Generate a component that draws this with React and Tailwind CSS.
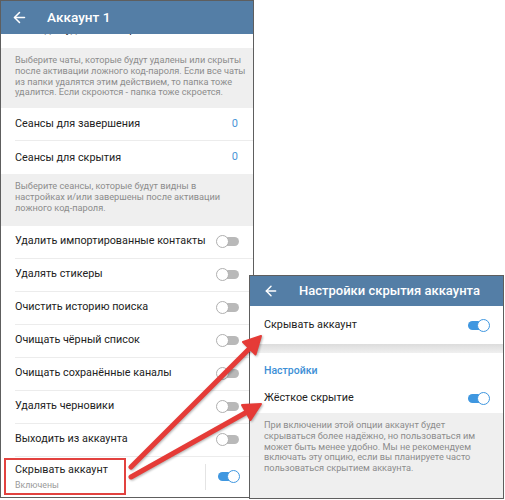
import React from "react";
import { ArrowLeft } from "lucide-react";

const Toggle = ({ on }) => (
  <div className="relative w-[24px] h-[13px] flex items-center justify-center">
    <div
      className={`w-[21px] h-[9px] rounded-full ${
        on ? "bg-[#3f97e0]" : "bg-[#b9b9b9]"
      }`}
    />
    <div
      className={`absolute top-0 w-[13px] h-[13px] rounded-full bg-white border-[1.5px] ${
        on ? "right-0 border-[#3f97e0]" : "left-0 border-[#b0b0b0]"
      }`}
    />
  </div>
);

const Row = ({ label, value, toggle, last }) => (
  <div className="h-[33px] pl-[14px] bg-white">
    <div
      className={`h-full flex items-center justify-between pr-[13px] ${
        last ? "" : "border-b border-[#ececec]"
      }`}
    >
      <span className="text-[10.8px] text-[#222] whitespace-nowrap">{label}</span>
      {value !== undefined && (
        <span className="text-[11px] text-[#4a95d6] pr-[2px]">{value}</span>
      )}
      {toggle !== undefined && <Toggle on={toggle} />}
    </div>
  </div>
);

const Info = ({ lines, className = "" }) => (
  <div
    className={`bg-[#efefef] px-[14px] pt-[7px] text-[9.2px] leading-[10.8px] text-[#8c8c8c] ${className}`}
  >
    {lines.map((l) => (
      <div key={l} className="whitespace-nowrap">
        {l}
      </div>
    ))}
  </div>
);

export default function App() {
  return (
    <div className="relative w-[505px] h-[500px] bg-white overflow-hidden font-['Roboto',sans-serif]">
      {/* left window */}
      <div className="w-[254px] h-[498px] border border-[#5e5e5e] flex flex-col overflow-hidden bg-white">
        <div className="h-[33px] shrink-0 bg-[#547ea6] flex items-center pl-[10px] gap-[19px] relative z-10">
          <ArrowLeft className="w-[17px] h-[17px] text-white" strokeWidth={2.2} />
          <span className="text-white text-[13.6px] font-medium">Аккаунт 1</span>
        </div>
        <div className="flex-1 overflow-hidden">
          <div className="-mt-[20px] mb-px">
            <Row label="Чаты для удаления/скрытия" value="0" last />
          </div>
          <Info
            className="pb-[10px]"
            lines={[
              "Выберите чаты, которые будут удалены или скрыты",
              "после активации ложного код-пароля. Если все чаты",
              "из папки удалятся этим действием, то папка тоже",
              "удалится. Если скроются - папка тоже скроется.",
            ]}
          />
          <Row label="Сеансы для завершения" value="0" />
          <Row label="Сеансы для скрытия" value="0" last />
          <Info
            className="pb-[12px]"
            lines={[
              "Выберите сеансы, которые будут видны в",
              "настройках и/или завершены после активации",
              "ложного код-пароля.",
            ]}
          />
          <Row label="Удалить импортированные контакты" toggle={false} />
          <Row label="Удалять стикеры" toggle={false} />
          <Row label="Очистить историю поиска" toggle={false} />
          <Row label="Очищать чёрный список" toggle={false} />
          <Row label="Очищать сохранённые каналы" toggle={false} />
          <Row label="Удалять черновики" toggle={false} />
          <Row label="Выходить из аккаунта" toggle={false} />
          <div className="h-[40px] flex items-center pl-[3px] pr-[13px] bg-white">
            <div className="w-[122px] h-[37px] border-2 border-[#e2423f] flex flex-col justify-center pl-[9px]">
              <span className="text-[10.8px] text-[#222] leading-[14px] whitespace-nowrap">Скрывать аккаунт</span>
              <span className="text-[8.8px] text-[#9a9a9a] leading-[12px] mt-[2px]">Включены</span>
            </div>
            <div className="flex-1" />
            <div className="w-px h-[26px] bg-[#e4e4e4] mr-[10px]" />
            <Toggle on />
          </div>
        </div>
      </div>

      {/* right window */}
      <div className="absolute left-[249px] top-[275px] w-[255px] h-[224px] border border-[#5e5e5e] bg-white flex flex-col overflow-hidden">
        <div className="h-[30px] shrink-0 bg-[#547ea6] flex items-center pl-[13px] gap-[20px]">
          <ArrowLeft className="w-[16px] h-[16px] text-white" strokeWidth={2.2} />
          <span className="text-white text-[13px] font-medium whitespace-nowrap">Настройки скрытия аккаунта</span>
        </div>
        <div className="h-[38px] flex items-center justify-between pl-[14px] pr-[13px]">
          <span className="text-[10.8px] text-[#222]">Скрывать аккаунт</span>
          <Toggle on />
        </div>
        <div className="h-[9px] bg-gradient-to-b from-[#dcdcdc] to-[#f0f0f0]" />
        <div className="h-[30px] flex items-end pl-[14px] pb-[4px]">
          <span className="text-[10.5px] font-medium text-[#3d8fd6]">Настройки</span>
        </div>
        <div className="h-[30px] flex items-center justify-between pl-[14px] pr-[13px]">
          <span className="text-[10.8px] text-[#222]">Жёсткое скрытие</span>
          <Toggle on />
        </div>
        <Info
          className="flex-1"
          lines={[
            "При включении этой опции аккаунт будет",
            "скрываться более надёжно, но пользоваться им",
            "может быть менее удобно. Мы не рекомендуем",
            "включать эту опцию, если вы планируете часто",
            "пользоваться скрытием аккаунта.",
          ]}
        />
      </div>

      {/* arrows */}
      <svg
        className="absolute inset-0 pointer-events-none"
        width="505"
        height="500"
        viewBox="0 0 505 500"
      >
        <g
          fill="#e53b37"
          stroke="#e53b37"
          strokeLinecap="round"
          strokeLinejoin="round"
          style={{ filter: "drop-shadow(1px 1px 1px rgba(0,0,0,0.3))" }}
        >
          <line x1="131" y1="467" x2="250" y2="348" strokeWidth="5" />
          <polygon points="261,336 255.5,354.5 243,342" strokeWidth="2" />
          <line x1="131" y1="477" x2="247" y2="412" strokeWidth="5" />
          <polygon points="261,404 250.5,420 242,405" strokeWidth="2" />
        </g>
      </svg>
    </div>
  );
}
